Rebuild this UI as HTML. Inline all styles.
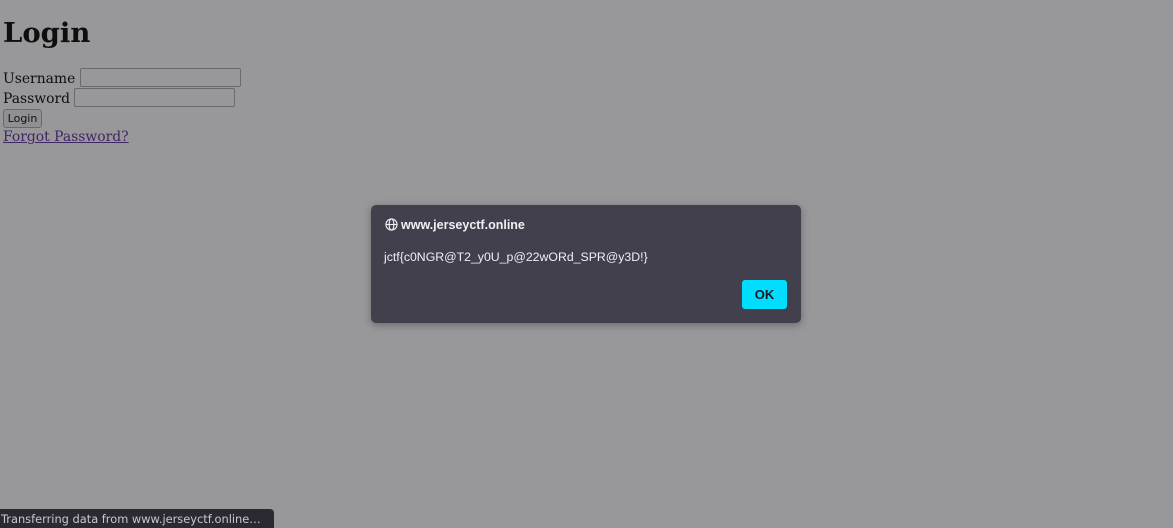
<!DOCTYPE html>
<html><head><style>
html,body{margin:0;padding:0;width:1173px;height:528px;overflow:hidden;background:#98979a;}
body{font-family:"DejaVu Serif",serif;font-size:16px;color:#0e0e0e;position:relative;}
h1{position:absolute;left:3px;top:15px;margin:0;font-size:27.5px;font-weight:bold;line-height:36px;}
.row{position:absolute;left:3px;font-size:13.9px;line-height:20px;}
.inp{display:inline-block;vertical-align:top;width:159px;height:17px;border:1px solid #6a696c;border-radius:2px;background:#98979a;margin-top:-1px;}
.btn{position:absolute;left:3px;top:109px;width:37px;height:17px;border:1px solid #6a696c;border-radius:3px;background:#908f92;font-family:"DejaVu Sans",sans-serif;font-size:11px;line-height:17px;text-align:center;color:#111;}
a{position:absolute;left:3px;top:127px;color:#3f2664;text-decoration:underline;line-height:20px;font-size:13.9px;}
.dlg{position:absolute;left:371px;top:205px;width:430px;height:118px;background:#42404c;border-radius:5px;box-shadow:0 2px 8px rgba(0,0,0,.3);font-family:"Liberation Sans",sans-serif;color:#f0f0f4;}
.t{position:absolute;left:14px;top:13px;font-size:12.5px;font-weight:bold;}
.m{position:absolute;left:13px;top:45px;font-size:12.3px;}
.ok{position:absolute;left:371px;top:75px;width:45px;height:29px;background:#00ddff;border-radius:3px;color:#1b1b25;font-weight:bold;font-size:13px;line-height:29px;text-align:center;}
.st{position:absolute;left:0;top:509px;width:274px;height:19px;background:#2b2a33;border-radius:0 4px 0 0;color:#c8c8cc;font-family:"DejaVu Sans",sans-serif;font-size:11.4px;line-height:21px;padding-left:1px;box-sizing:border-box;white-space:nowrap;}
</style></head><body>
<h1>Login</h1>
<div class="row" style="top:69px">Username <span class="inp"></span></div>
<div class="row" style="top:89px">Password <span class="inp"></span></div>
<div class="btn">Login</div>
<a>Forgot Password?</a>
<div class="dlg">
<div class="t"><svg width="13" height="13" viewBox="0 0 14 14" style="vertical-align:-2px;margin-right:3px" fill="none" stroke="#f0f0f4" stroke-width="1.2"><circle cx="7" cy="7" r="6"/><ellipse cx="7" cy="7" rx="2.6" ry="6"/><path d="M1 7h12"/></svg>www.jerseyctf.online</div>
<div class="m">jctf{c0NGR@T2_y0U_p@22wORd_SPR@y3D!}</div>
<div class="ok">OK</div>
</div>
<div class="st">Transferring data from www.jerseyctf.online…</div>
</body></html>
